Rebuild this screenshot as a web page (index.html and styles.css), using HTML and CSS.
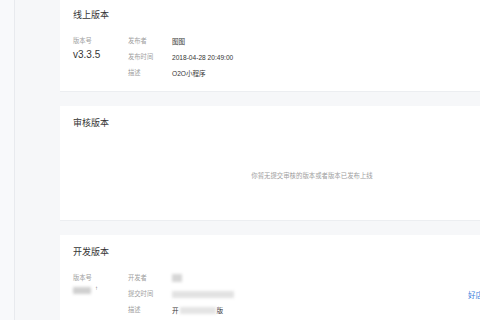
FILE: index.html
```html
<!DOCTYPE html>
<html lang="zh-CN">
<head>
    <meta charset="UTF-8">
    <meta name="viewport" content="width=device-width, initial-scale=1.0">
    <title>版本管理</title>
    <link rel="stylesheet" href="styles.css">
</head>
<body>
    <div class="page">
        <div class="sidebar"></div>
        <div class="main">
            <!-- 线上版本 -->
            <div class="card card-online">
                <h2 class="card-title">线上版本</h2>
                <div class="info">
                    <div class="ver">
                        <div class="label">版本号</div>
                        <div class="ver-num">v3.3.5</div>
                    </div>
                    <div class="rows">
                        <div class="row"><span class="label">发布者</span><span class="value">图图</span></div>
                        <div class="row"><span class="label">发布时间</span><span class="value">2018-04-28 20:49:00</span></div>
                        <div class="row"><span class="label">描述</span><span class="value">O2O小程序</span></div>
                    </div>
                </div>
            </div>

            <!-- 审核版本 -->
            <div class="card card-review">
                <h2 class="card-title">审核版本</h2>
                <div class="empty">你暂无提交审核的版本或者版本已发布上线</div>
            </div>

            <!-- 开发版本 -->
            <div class="card card-dev">
                <h2 class="card-title">开发版本</h2>
                <div class="info">
                    <div class="info-main">
                        <div class="ver">
                            <div class="label">版本号</div>
                            <div class="ver-num"><span class="blur blur-ver"></span><span class="mark">↑</span></div>
                        </div>
                        <div class="rows">
                            <div class="row"><span class="label">开发者</span><span class="value"><span class="blur blur-user"></span></span></div>
                            <div class="row"><span class="label">提交时间</span><span class="value"><span class="blur blur-time"></span></span></div>
                            <div class="row"><span class="label">描述</span><span class="value">开<span class="blur blur-desc"></span>版</span></div>
                        </div>
                    </div>
                    <a class="link" href="#">好店小程序</a>
                </div>
            </div>
        </div>
    </div>
</body>
</html>
```

FILE: styles.css
```css
body { margin: 0; background-color: #f6f7f9; font-family: "Liberation Sans", "Noto Sans CJK SC", sans-serif; overflow: hidden; }
.page { display: flex; width: 564px; min-height: 320px; }
.sidebar { width: 14px; flex-shrink: 0; background-color: #f8f9fb; border-right: 1px solid #e8eaee; }
.main { padding-left: 45px; width: 504px; margin-top: -2px; }
.card { background-color: #fff; padding: 10px 13px 11px; margin-bottom: 14px; border-bottom: 1px solid #eceef1; box-sizing: border-box; }
.card-title { margin: 0; font-size: 9px; line-height: 14px; font-weight: normal; color: #353535; }
.info { display: flex; margin-top: 11px; }
.ver { width: 55px; }
.label { font-size: 6.3px; line-height: 16px; color: #a0a0a0; }
.ver-num { font-size: 10px; line-height: 12px; color: #353535; display: flex; align-items: center; }
.rows { display: flex; flex-direction: column; }
.row { display: flex; height: 16px; align-items: center; }
.row .label { width: 44px; }
.value { font-size: 6.6px; color: #353535; display: flex; align-items: center; }
.card-online { height: 94px; }
.card-review { height: 115px; }
.empty { height: 91px; display: flex; align-items: center; justify-content: center; font-size: 6.4px; color: #a0a0a0; }
.card-dev { min-height: 100px; }
.info-main { display: flex; width: 395px; }
.link { align-self: center; font-size: 7.5px; color: #3d7fdc; text-decoration: none; white-space: nowrap; }
.blur { display: inline-block; background-color: #d6d6d6; filter: blur(1.5px); height: 7px; }
.blur-ver { width: 18px; background-color: #d0d0d0; }
.mark { font-size: 6px; color: #777; margin-left: 4px; margin-top: -4px; }
.blur-user { width: 10px; height: 8px; }
.blur-time { width: 62px; background-color: #e2e2e2; }
.blur-desc { width: 36px; background-color: #e4e4e4; margin: 0 1px; }
```
